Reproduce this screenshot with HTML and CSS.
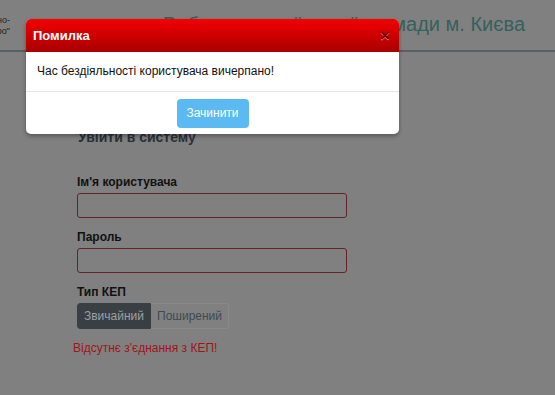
FILE: index.html
```html
<!DOCTYPE html>
<html lang="uk">
<head>
<meta charset="utf-8">
<title>Помилка</title>
<link rel="stylesheet" href="styles.css">
</head>
<body>
<header class="top">
  <div class="logo">
    <div class="logo-line"><span>Комунальне підприємство обчислювально-</span></div>
    <div class="logo-line"><span>інформаційне підприємство „Київ-бюро"</span></div>
  </div>
  <h1 class="title">Веб-портал київської громади м. Києва</h1>
</header>
<main class="login">
  <h2 class="login-title">Увійти в систему</h2>
  <label class="field-label">Ім'я користувача</label>
  <div class="field-input"></div>
  <label class="field-label">Пароль</label>
  <div class="field-input"></div>
  <label class="field-label">Тип КЕП</label>
  <div class="btn-group">
    <span class="seg seg-active">Звичайний</span>
    <span class="seg">Поширений</span>
  </div>
  <p class="error-text">Відсутнє з'єднання з КЕП!</p>
</main>
<div class="modal">
  <div class="modal-header">
    <span class="modal-title">Помилка</span>
    <span class="modal-close">×</span>
  </div>
  <div class="modal-body">Час бездіяльності користувача вичерпано!</div>
  <div class="modal-footer">
    <button class="btn-close">Зачинити</button>
  </div>
</div>
</body>
</html>
```
FILE: styles.css
```css
html, body {
  margin: 0;
  padding: 0;
}
body {
  background: #808080;
  font-family: "Liberation Sans", Arial, sans-serif;
  width: 555px;
  height: 395px;
  overflow: hidden;
  position: relative;
}
.top {
  height: 50px;
  border-bottom: 2px solid #5b5f61;
  display: flex;
  align-items: flex-start;
}
.logo {
  width: 10px;
  overflow: hidden;
  padding-top: 15px;
  font-size: 9px;
  line-height: 11px;
  color: #222;
}
.logo-line {
  display: flex;
  justify-content: flex-end;
  white-space: nowrap;
}
.title {
  margin: 12px 0 0 153px;
  font-size: 20px;
  font-weight: normal;
  color: #35605c;
  white-space: nowrap;
  line-height: 25px;
}
.login {
  display: flex;
  flex-direction: column;
  align-items: flex-start;
  padding-left: 77px;
}
.login-title {
  margin: 77px 0 0 1px;
  font-size: 14px;
  line-height: 17px;
  font-weight: bold;
  color: #2b3139;
}
.field-label {
  margin-top: 29px;
  font-size: 12px;
  line-height: 15px;
  font-weight: bold;
  color: #111;
}
.field-input {
  margin-top: 3px;
  width: 268px;
  height: 23px;
  border: 1px solid #60242a;
  border-radius: 3px;
}
.field-input + .field-label {
  margin-top: 12px;
}
.btn-group {
  margin-top: 3px;
  display: flex;
  height: 26px;
  border-radius: 3px;
  overflow: hidden;
}
.seg {
  display: flex;
  align-items: center;
  padding: 0 6px;
  font-size: 12px;
  color: #3e4a55;
  border: 1px solid #878a8c;
  border-left: none;
  border-radius: 0 3px 3px 0;
}
.seg-active {
  background: #3a3f44;
  color: #9aa0a5;
  border: 1px solid #3a3f44;
  border-radius: 3px 0 0 3px;
}
.error-text {
  margin: 12px 0 0 -4px;
  font-size: 12px;
  line-height: 15px;
  color: #a3141a;
}
.modal {
  position: absolute;
  left: 26px;
  top: 19px;
  width: 373px;
  background: #fff;
  border-radius: 5px;
  overflow: hidden;
  box-shadow: 0 2px 4px rgba(0,0,0,0.35);
}
.modal-header {
  height: 33px;
  display: flex;
  align-items: center;
  justify-content: space-between;
  padding: 0 9px 0 7px;
  background: linear-gradient(#f40000, #a80000);
}
.modal-title {
  color: #fff;
  font-weight: bold;
  font-size: 13px;
}
.modal-close {
  color: #6a0000;
  font-size: 17px;
  font-weight: bold;
  line-height: 1;
  text-shadow: 0 1px 0 #e88;
  opacity: 0.8;
}
.modal-body {
  padding: 12px 11px;
  font-size: 12px;
  line-height: 15px;
  color: #111;
  border-bottom: 1px solid #e5e5e5;
}
.modal-footer {
  height: 42px;
  display: flex;
  justify-content: center;
  align-items: center;
}
.btn-close {
  width: 72px;
  height: 29px;
  border: none;
  border-radius: 4px;
  background: #5bbaf2;
  color: #fff;
  font-family: "Liberation Sans", Arial, sans-serif;
  font-size: 12px;
  padding: 0;
}
```
